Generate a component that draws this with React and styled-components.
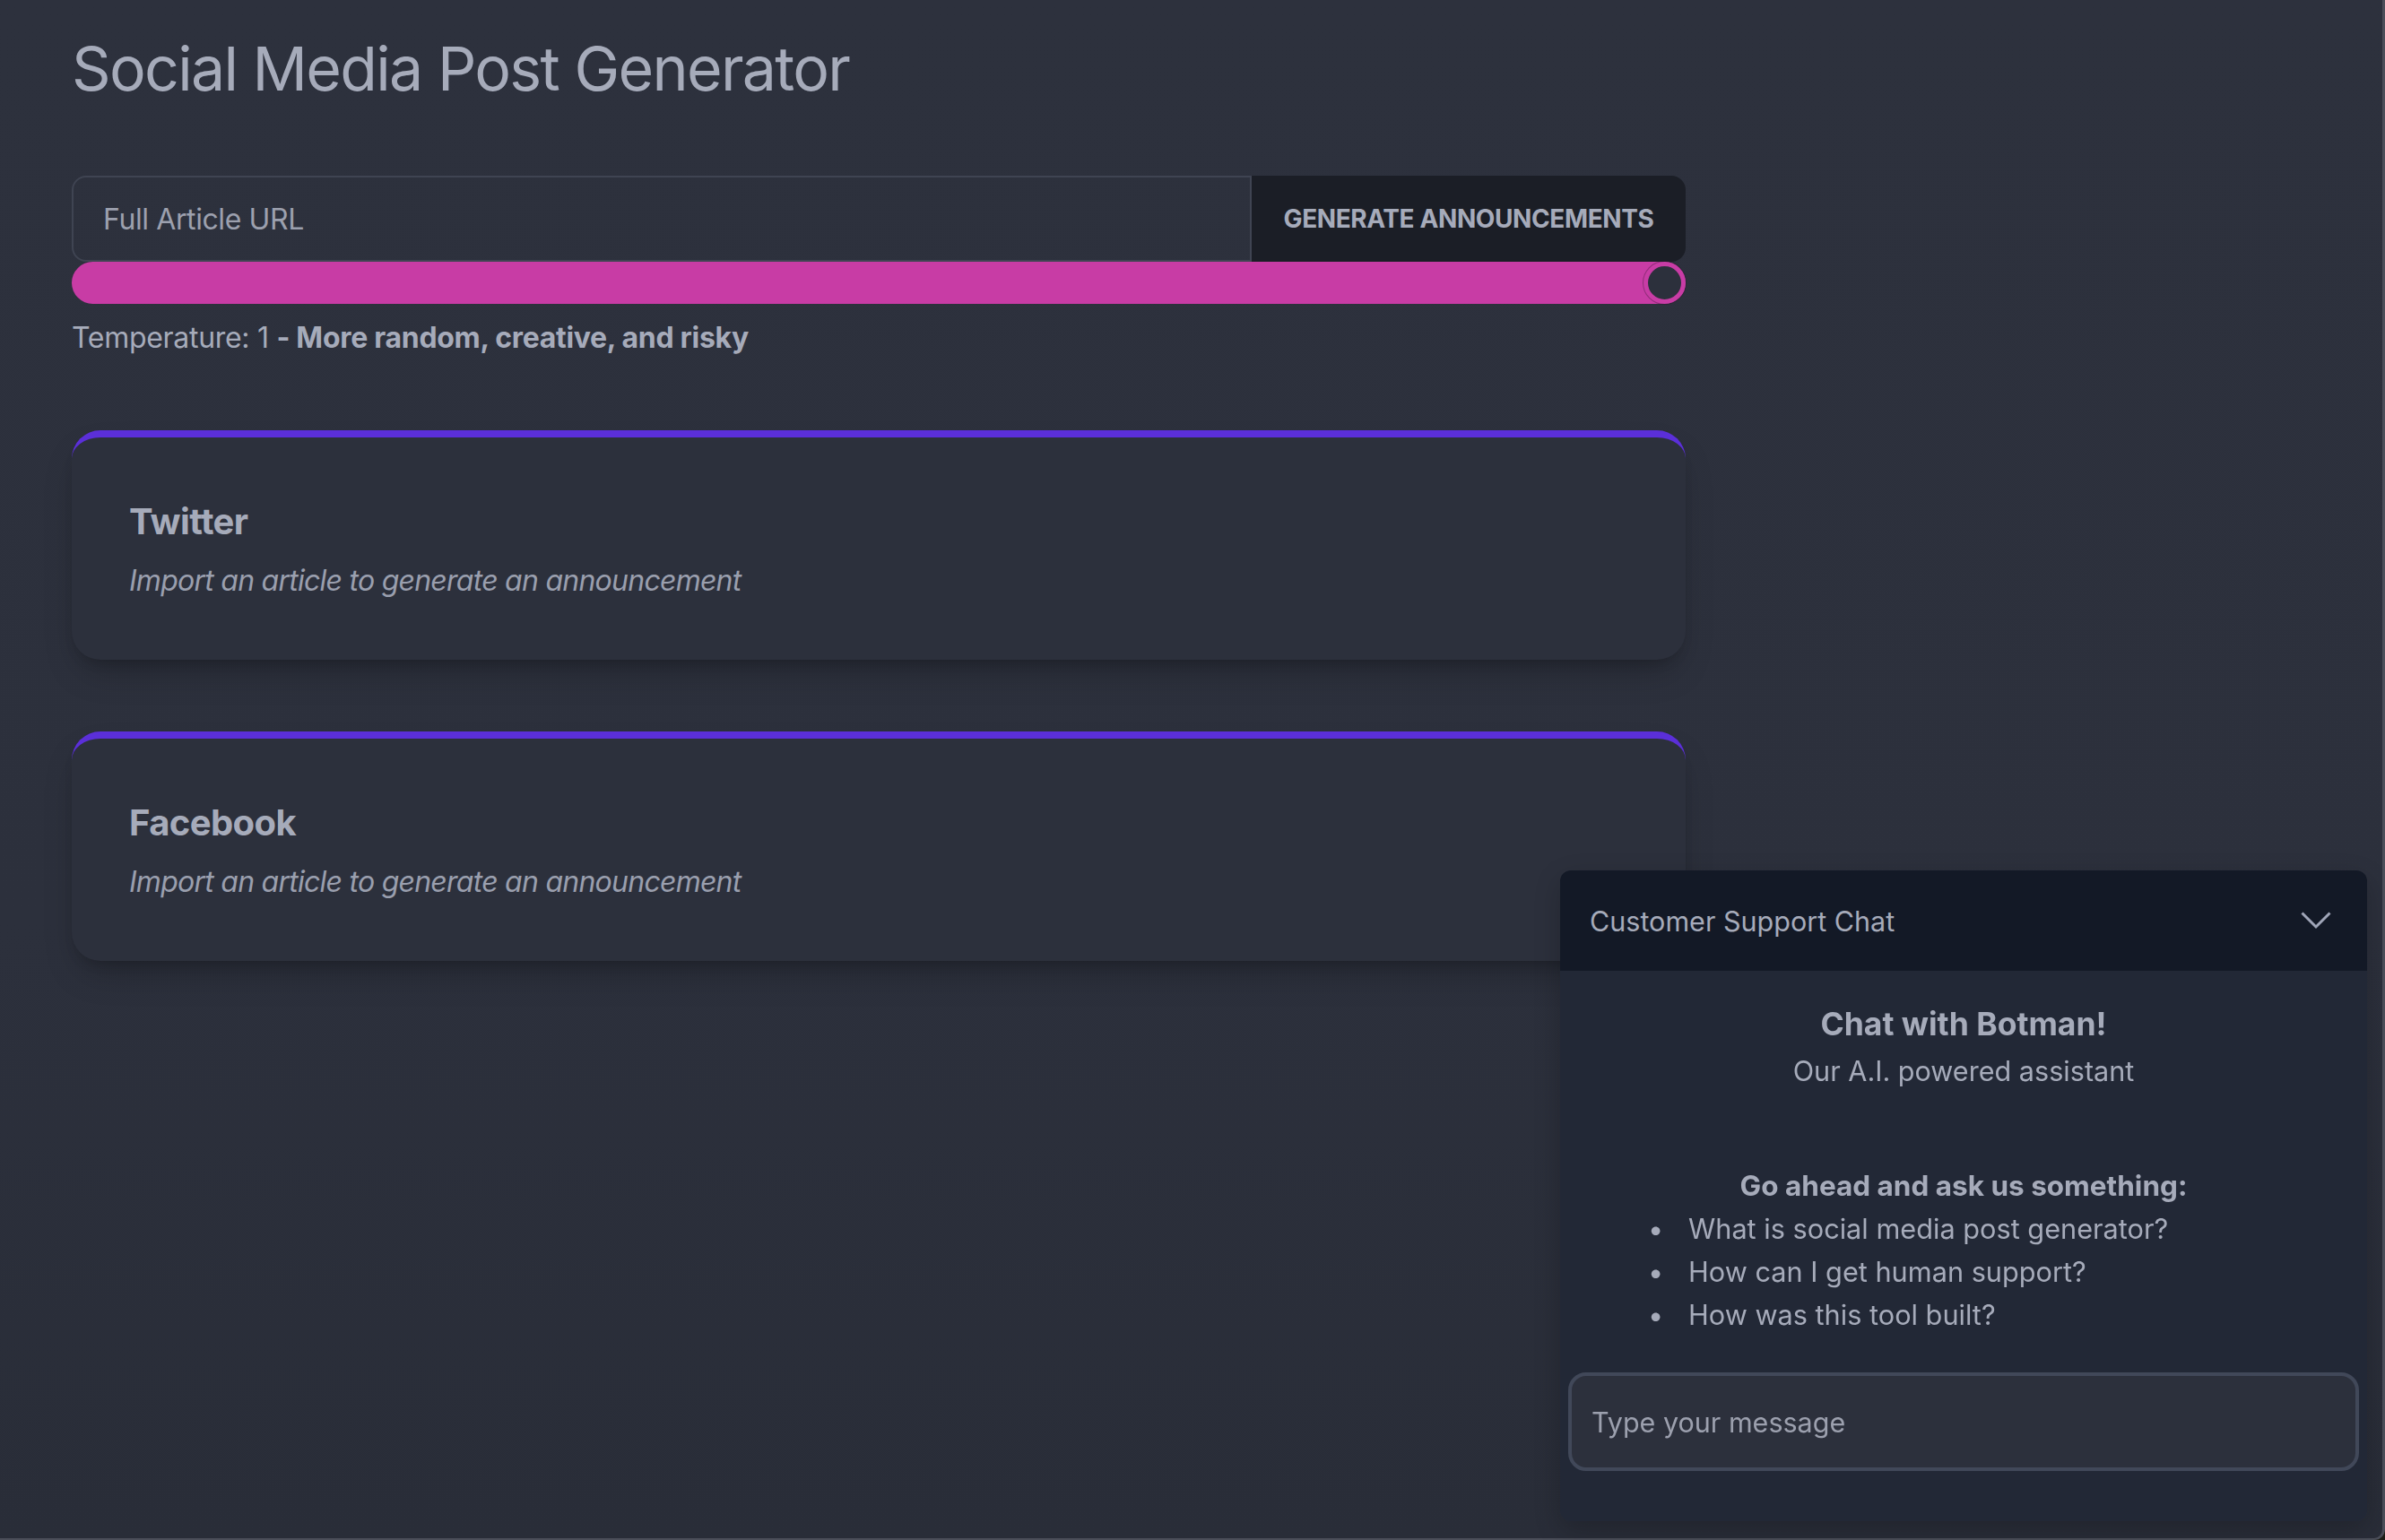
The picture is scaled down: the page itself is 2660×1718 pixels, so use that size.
import styled, { createGlobalStyle } from 'styled-components';

const colors = {
  page: '#2c303c',
  text: '#a6abba',
  muted: '#9a9fae',
  border: '#3f4452',
  button: '#1b1e26',
  slider: '#c83ca5',
  accent: '#5b2fd9',
  chatHead: '#131926',
  chatBody: '#222836',
  chatInput: '#2c303c',
  chatRing: '#414859',
};

const GlobalStyle = createGlobalStyle`
  html, body {
    margin: 0;
    padding: 0;
    background: #1e1f18;
  }
  body {
    font-family: Inter, 'Noto Sans', sans-serif;
    color: ${colors.text};
  }
  * {
    box-sizing: border-box;
  }
`;

const Page = styled.div`
  min-height: 100vh;
  padding: 40px 80px 80px;
  background: linear-gradient(180deg, #2d313d 0%, #2c303c 60%, #292d38 100%);
  border-right: 3px solid #4b4e59;
  border-bottom: 2px solid #4b4e59;
  border-bottom-right-radius: 12px;
`;

const Main = styled.main`
  width: 1800px;
  display: flex;
  flex-direction: column;
`;

const Title = styled.h1`
  margin: 0;
  font-size: 68px;
  line-height: 72px;
  font-weight: 400;
  letter-spacing: -1.7px;
  color: ${colors.text};
`;

const UrlForm = styled.form`
  display: flex;
  height: 96px;
  margin-top: 84px;
`;

const UrlInput = styled.input`
  flex: 1;
  min-width: 0;
  background: transparent;
  border: 2px solid ${colors.border};
  border-radius: 16px 0 0 16px;
  padding: 0 33px;
  font-family: inherit;
  font-size: 32px;
  letter-spacing: -0.4px;
  color: ${colors.text};
  outline: none;

  &::placeholder {
    color: #9ca0ae;
  }
`;

const GenerateButton = styled.button`
  width: 484px;
  border: none;
  border-radius: 0 16px 16px 0;
  background: ${colors.button};
  color: ${colors.text};
  font-family: inherit;
  font-size: 28px;
  font-weight: 700;
  text-transform: uppercase;
  letter-spacing: -0.4px;
  cursor: pointer;
`;

const SliderTrack = styled.div`
  height: 47px;
  border-radius: 999px;
  background: ${colors.slider};
  display: flex;
  justify-content: flex-end;
  align-items: center;
`;

const SliderThumb = styled.div`
  width: 47px;
  height: 47px;
  border-radius: 50%;
  border: 5px solid ${colors.slider};
  background: ${colors.page};
  box-shadow: 0 0 0 1px rgba(40, 20, 40, 0.35);
`;

const TempLabel = styled.p`
  margin: 14px 0 0;
  font-size: 32px;
  line-height: 48px;
  letter-spacing: -0.3px;

  strong {
    font-weight: 700;
  }
`;

const CardList = styled.div`
  display: flex;
  flex-direction: column;
  gap: 80px;
  margin-top: 79px;
`;

const Card = styled.section`
  border-top: 8px solid ${colors.accent};
  border-radius: 32px;
  padding: 64px;
  background: ${colors.page};
  box-shadow: 0 20px 40px -12px rgba(0, 0, 0, 0.28), 0 8px 16px -8px rgba(0, 0, 0, 0.2);
`;

const CardTitle = styled.h2`
  margin: 0;
  font-size: 40px;
  line-height: 60px;
  font-weight: 700;
  letter-spacing: -0.6px;
`;

const CardText = styled.p`
  margin: 12px 0 0;
  font-size: 32px;
  line-height: 48px;
  font-style: italic;
  letter-spacing: -0.75px;
  color: ${colors.muted};
`;

const ChatWidget = styled.aside`
  position: fixed;
  right: 20px;
  bottom: 21px;
  width: 900px;
  border-radius: 12px;
  overflow: hidden;
  box-shadow: 0 10px 30px rgba(0, 0, 0, 0.2);
`;

const ChatHeader = styled.header`
  height: 112px;
  background: ${colors.chatHead};
  display: flex;
  align-items: center;
  justify-content: space-between;
  padding: 0 40px 0 33px;
  font-size: 30.5px;
`;

const ChatBody = styled.div`
  background: ${colors.chatBody};
  padding: 36px 9px 56px;
  display: flex;
  flex-direction: column;
`;

const Intro = styled.div`
  text-align: center;
`;

const IntroTitle = styled.h3`
  margin: 0;
  font-size: 35.5px;
  line-height: 48px;
  font-weight: 700;
`;

const IntroSub = styled.p`
  margin: 6px 0 0;
  font-size: 30.6px;
  line-height: 44px;
`;

const PromptTitle = styled.p`
  margin: 82px 0 0;
  text-align: center;
  font-size: 31.5px;
  line-height: 48px;
  font-weight: 700;
`;

const PromptList = styled.ul`
  margin: 0;
  padding: 0 0 0 89px;
  font-size: 30.7px;
  line-height: 48px;
  list-style: none;
`;

const PromptItem = styled.li`
  height: 48px;

  &::before {
    content: '•';
    display: inline-block;
    width: 45px;
  }
`;

const MessageInput = styled.input`
  margin-top: 40px;
  height: 110px;
  width: 100%;
  border: 4px solid ${colors.chatRing};
  border-radius: 20px;
  background: ${colors.chatInput};
  padding: 0 22px;
  font-family: inherit;
  font-size: 30.5px;
  color: ${colors.text};
  outline: none;

  &::placeholder {
    color: #9ca0ae;
  }
`;

function Chevron() {
  return (
    <svg width="34" height="20" viewBox="0 0 34 20" fill="none">
      <path d="M1.5 1.5 L17 17 L32.5 1.5" stroke="#a0a6b8" strokeWidth="3" />
    </svg>
  );
}

const posts = ['Twitter', 'Facebook'];
const prompts = [
  'What is social media post generator?',
  'How can I get human support?',
  'How was this tool built?',
];

export default function App() {
  return (
    <>
      <GlobalStyle />
      <Page>
        <Main>
          <Title>Social Media Post Generator</Title>
          <UrlForm onSubmit={(e) => e.preventDefault()}>
            <UrlInput placeholder="Full Article URL" />
            <GenerateButton type="submit">Generate Announcements</GenerateButton>
          </UrlForm>
          <SliderTrack>
            <SliderThumb />
          </SliderTrack>
          <TempLabel>
            Temperature: 1 <strong>- More random, creative, and risky</strong>
          </TempLabel>
          <CardList>
            {posts.map((name) => (
              <Card key={name}>
                <CardTitle>{name}</CardTitle>
                <CardText>Import an article to generate an announcement</CardText>
              </Card>
            ))}
          </CardList>
        </Main>
      </Page>
      <ChatWidget>
        <ChatHeader>
          <span>Customer Support Chat</span>
          <Chevron />
        </ChatHeader>
        <ChatBody>
          <Intro>
            <IntroTitle>Chat with Botman!</IntroTitle>
            <IntroSub>Our A.I. powered assistant</IntroSub>
          </Intro>
          <PromptTitle>Go ahead and ask us something:</PromptTitle>
          <PromptList>
            {prompts.map((p) => (
              <PromptItem key={p}>{p}</PromptItem>
            ))}
          </PromptList>
          <MessageInput placeholder="Type your message" />
        </ChatBody>
      </ChatWidget>
    </>
  );
}
